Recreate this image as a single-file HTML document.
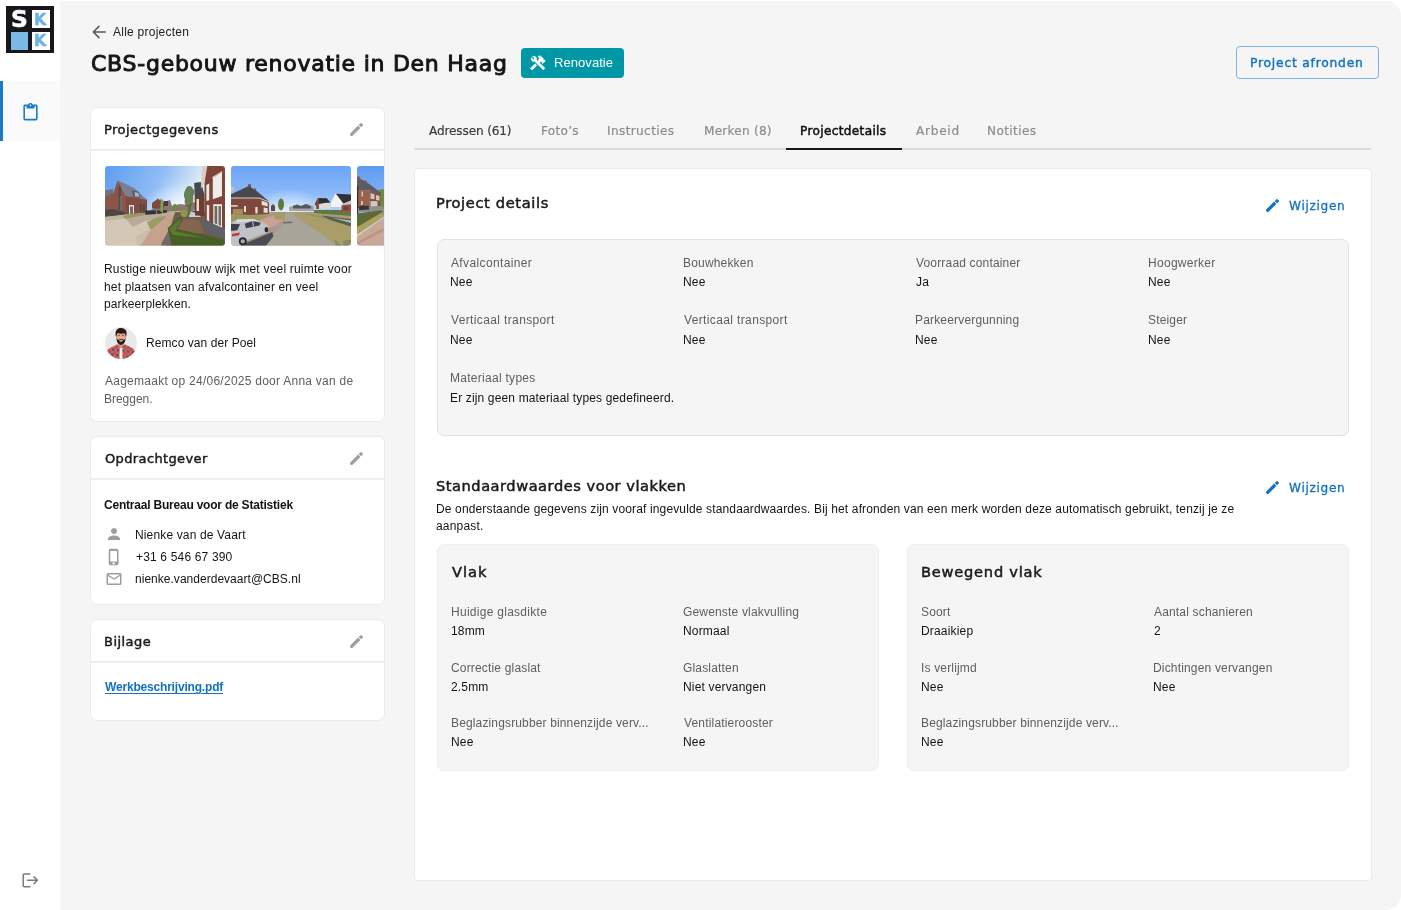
<!DOCTYPE html>
<html lang="nl">
<head>
<meta charset="utf-8">
<title>CBS-gebouw renovatie in Den Haag</title>
<style>
*{box-sizing:border-box;margin:0;padding:0}
html,body{width:1401px;height:910px;overflow:hidden;background:#fff}
body{font-family:"Liberation Sans",sans-serif;font-size:12.3px;color:#1a1a1a;position:relative}
.abs{position:absolute}
.t{position:absolute;white-space:nowrap;font-family:"Liberation Sans",sans-serif;will-change:transform}
.dj{font-family:"DejaVu Sans","Liberation Sans",sans-serif}
.b{font-weight:700}
svg{position:absolute;overflow:visible}
#main{left:60px;top:1px;width:1341px;height:909px;background:#f5f5f5;border-radius:0 15px 15px 0}
.card{position:absolute;background:#fff;border:1px solid #ebebeb;border-radius:7px}
.hr{position:absolute;height:2px;background:#efefef}
.box{position:absolute;background:#f5f5f5;border-radius:7px}
</style>
</head>
<body>
<!-- sidebar -->
<div class="abs" style="left:0;top:81px;width:60px;height:60px;background:#fafafa"></div>
<div class="abs" style="left:0;top:81px;width:3px;height:60px;background:#187bc8"></div>
<div class="abs" id="main"></div>
<!-- logo -->
<div class="abs" style="left:6.4px;top:6px;width:47.3px;height:47px;background:#19171b"></div>
<div class="abs" style="left:32px;top:10px;width:18.2px;height:18px;background:#fff"></div>
<div class="abs" style="left:32px;top:32px;width:18.2px;height:17.8px;background:#fff"></div>
<div class="abs" style="left:10.5px;top:32px;width:17.5px;height:17.8px;background:#7ab9e6"></div>
<!-- header shapes -->
<div class="abs" style="left:521px;top:47.5px;width:103px;height:30px;background:#0097a7;border-radius:4px"></div>
<div class="abs" style="left:1236px;top:46px;width:143px;height:33px;border:1px solid #7fb2e0;border-radius:4px"></div>
<!-- tabs line -->
<div class="abs" style="left:414px;top:148px;width:957px;height:2px;background:#dcdcdc"></div>
<div class="abs" style="left:786px;top:148px;width:115.5px;height:2px;background:#1a1a1a"></div>
<!-- left cards -->
<div class="card" style="left:90px;top:107px;width:295px;height:315px"></div>
<div class="hr" style="left:91px;top:149px;width:293px"></div>
<div class="card" style="left:90px;top:436px;width:295px;height:169px"></div>
<div class="hr" style="left:91px;top:478px;width:293px"></div>
<div class="card" style="left:90px;top:619px;width:295px;height:102px"></div>
<div class="hr" style="left:91px;top:661px;width:293px"></div>
<!-- main panel -->
<div class="card" style="left:414px;top:168px;width:958px;height:713px;border-radius:4px"></div>
<div class="box" style="left:436.5px;top:239px;width:912.5px;height:197px;border:1px solid #e1e1e1"></div>
<div class="box" style="left:436.5px;top:543.5px;width:442.5px;height:227px;border:1px solid #efefef"></div>
<div class="box" style="left:907px;top:543.5px;width:442px;height:227px;border:1px solid #efefef"></div>
<!-- icons -->
<svg style="left:20.7px;top:102.9px" width="19" height="19" viewBox="0 0 24 24"><path fill="#187bc8" d="M19 2h-4.18C14.4.84 13.3 0 12 0S9.6.84 9.18 2H5c-1.1 0-2 .9-2 2v16c0 1.1.9 2 2 2h14c1.1 0 2-.9 2-2V4c0-1.1-.9-2-2-2zm-7 0c.55 0 1 .45 1 1s-.45 1-1 1-1-.45-1-1 .45-1 1-1zm7 18H5V4h2v3h10V4h2v16z"/></svg>
<svg style="left:20px;top:870px" width="20" height="20" viewBox="0 0 20 20"><path fill="none" stroke="#7a7a7a" stroke-width="1.5" stroke-linecap="round" stroke-linejoin="round" d="M9.8 3.9H4.2a1 1 0 0 0-1 1v10.8a1 1 0 0 0 1 1h5.6M7.5 10.3h9.6M14 6.9l3.4 3.4-3.4 3.4"/></svg>
<svg style="left:91px;top:24px" width="16" height="16" viewBox="0 0 16 16"><path fill="none" stroke="#555" stroke-width="1.5" stroke-linecap="round" stroke-linejoin="round" d="M14.3 8H2.6M7.9 2.4L2.3 8l5.6 5.6"/></svg>
<svg style="left:529px;top:53.5px" width="18" height="18" viewBox="0 0 24 24"><g fill="#fff" stroke="#fff" stroke-width="0.9" stroke-linejoin="round" transform="translate(24 0) scale(-1 1)"><rect x="16.34" y="12.87" width="3" height="8.49" transform="matrix(0.7071 -0.7071 0.7071 0.7071 -6.8754 17.6255)"/><path d="M17.5,10c1.93,0,3.5-1.57,3.5-3.5c0-0.58-0.16-1.12-0.41-1.6l-2.7,2.7L16.4,6.11l2.7-2.7C18.62,3.16,18.08,3,17.5,3 C15.57,3,14,4.57,14,6.5c0,0.41,0.08,0.8,0.21,1.16l-1.85,1.85l-1.78-1.78l0.71-0.71L9.88,5.61L12,3.49 c-1.17-1.17-3.07-1.17-4.24,0L4.22,7.03l1.41,1.41H2.81L2.1,9.15l3.54,3.54l0.71-0.71V9.15l1.41,1.41l0.71-0.71l1.78,1.78 l-7.41,7.41l2.12,2.12L16.34,9.79C16.7,9.92,17.09,10,17.5,10z"/></g></svg>
<svg style="left:105px;top:525.3px" width="18" height="18" viewBox="0 0 24 24"><path fill="#9e9e9e" d="M12 12c2.21 0 4-1.79 4-4s-1.79-4-4-4-4 1.79-4 4 1.79 4 4 4zm0 2c-2.67 0-8 1.34-8 4v2h16v-2c0-2.66-5.33-4-8-4z"/></svg>
<svg style="left:105px;top:547.6px" width="18" height="18" viewBox="0 0 24 24"><path fill="#9e9e9e" d="M15.5 1h-8C6.12 1 5 2.12 5 3.5v17C5 21.88 6.12 23 7.5 23h8c1.38 0 2.500-1.12 2.500-2.500v-17C18 2.120 16.880 1 15.500 1zm-4 21c-.83 0-1.500-.67-1.500-1.500s.67-1.500 1.500-1.500 1.500.67 1.500 1.500-.67 1.500-1.500 1.500zm4.500-4H7V4h9v14z"/></svg>
<svg style="left:104.7px;top:569.8px" width="18" height="18" viewBox="0 0 24 24"><path fill="#9e9e9e" d="M20 4H4c-1.100 0-1.990.9-1.990 2L2 18c0 1.100.9 2 2 2h16c1.100 0 2-.9 2-2V6c0-1.100-.9-2-2-2zm0 14H4V8l8 5 8-5v10zm-8-7L4 6h16l-8 5z"/></svg>

<svg style="left:347.9px;top:120.6px" width="17" height="17" viewBox="0 0 24 24"><g fill="#9e9e9e" transform="rotate(45 12 12)"><path d="M9.700 1.700a.9.900 0 0 1 .900-.900h2.800a.9.900 0 0 1 .900.900v3.500H9.700z"/><path d="M9.700 6.500h4.600v15.200a2.300 2.300 0 0 1-4.600 0z"/></g></svg>
<svg style="left:347.9px;top:449.6px" width="17" height="17" viewBox="0 0 24 24"><g fill="#9e9e9e" transform="rotate(45 12 12)"><path d="M9.700 1.700a.9.900 0 0 1 .900-.900h2.800a.9.900 0 0 1 .900.900v3.500H9.700z"/><path d="M9.700 6.500h4.600v15.200a2.300 2.300 0 0 1-4.600 0z"/></g></svg>
<svg style="left:347.9px;top:632.6px" width="17" height="17" viewBox="0 0 24 24"><g fill="#9e9e9e" transform="rotate(45 12 12)"><path d="M9.700 1.700a.9.900 0 0 1 .900-.900h2.800a.9.900 0 0 1 .900.900v3.500H9.700z"/><path d="M9.700 6.500h4.600v15.200a2.300 2.300 0 0 1-4.600 0z"/></g></svg>
<svg style="left:1264.2px;top:196.7px" width="17" height="17" viewBox="0 0 24 24"><g fill="#1272c2" transform="rotate(45 12 12)"><path d="M9.700 1.700a.9.900 0 0 1 .900-.900h2.800a.9.900 0 0 1 .900.900v3.500H9.700z"/><path d="M9.700 6.500h4.600v15.200a2.300 2.300 0 0 1-4.600 0z"/></g></svg>
<svg style="left:1264.2px;top:479.2px" width="17" height="17" viewBox="0 0 24 24"><g fill="#1272c2" transform="rotate(45 12 12)"><path d="M9.700 1.700a.9.900 0 0 1 .900-.900h2.800a.9.900 0 0 1 .900.900v3.500H9.700z"/><path d="M9.700 6.500h4.600v15.200a2.300 2.300 0 0 1-4.600 0z"/></g></svg>
<!-- photos -->
<div class="abs" style="left:105px;top:166.3px;width:278.6px;height:79.700px;overflow:hidden">
<svg style="left:0;top:0" width="120" height="79.700" viewBox="0 0 120 79.700">
<defs>
<linearGradient id="s1" x1="0" y1="0" x2="1" y2="0.35"><stop offset="0" stop-color="#5c9df2"/><stop offset="0.45" stop-color="#8fbcf5"/><stop offset="0.75" stop-color="#dbe9f6"/><stop offset="1" stop-color="#eef3f6"/></linearGradient>
<radialGradient id="g1" cx="0.66" cy="0.58" r="0.38"><stop offset="0" stop-color="#fff" stop-opacity="0.95"/><stop offset="1" stop-color="#fff" stop-opacity="0"/></radialGradient>
<filter id="bl" x="-5%" y="-5%" width="110%" height="110%"><feGaussianBlur stdDeviation="0.45"/></filter><clipPath id="c1"><rect width="120" height="79.700" rx="3"/></clipPath>
<linearGradient id="s2" x1="0" y1="0" x2="0" y2="1"><stop offset="0" stop-color="#6ba4f6"/><stop offset="0.3" stop-color="#86b6f8"/><stop offset="0.58" stop-color="#b4d3fa"/></linearGradient><linearGradient id="s3" x1="0" y1="0" x2="0" y2="1"><stop offset="0" stop-color="#5d9bf0"/><stop offset="0.5" stop-color="#8ebaf6"/></linearGradient><radialGradient id="g2" cx="0.48" cy="0.58" r="0.3"><stop offset="0" stop-color="#fff" stop-opacity="0.7"/><stop offset="1" stop-color="#fff" stop-opacity="0"/></radialGradient>
</defs>
<g clip-path="url(#c1)"><g filter="url(#bl)">
<rect width="120" height="80" fill="url(#s1)"/><rect width="120" height="80" fill="url(#g1)"/>
<path d="M44 45l4-2 3-6 5-4 6 5v-3l3-1 2 6 8-2 8 1 6-3 3 1v12H44z" fill="#8b7770"/>
<path d="M47 37l6-4.500 6 5v5H47z" fill="#7c4c3e"/><path d="M59 35h4v5h-4z" fill="#3d3f49"/>
<path d="M0 24.500l8-1v24.500H0z" fill="#8b5647"/><path d="M0 24.500l8-1.500v4l-8 4z" fill="#6f727e"/>
<path d="M8 49V28l4.700-13.700L21 30v19z" fill="#8a5748"/>
<path d="M12.700 14.300L29 22l13 11.700-21-3.500z" fill="#7b808e"/>
<path d="M21 30l21 3.700V47l-21 2z" fill="#7f4e41"/>
<path d="M27 24l7 2 1 6-7-1z" fill="#565c69"/><path d="M29.500 26l4 1 .5 4-4-.7z" fill="#aeb6c2"/>
<path d="M24 39h5v9h-5z" fill="#e6e1da"/><path d="M25 40.500h3v7.500h-3z" fill="#6d6f6a"/><path d="M35 38.500h1.800v7h-1.800zM38 38.500h1.800v7H38z" fill="#4d4542"/>
<path d="M13.500 22l1.500-4 1 4v22h-2.500z" fill="#5d4a48"/><path d="M15.200 30l1.800 0v14h-1.800z" fill="#6b6f78"/>
<path d="M0 44l8-1 12 3v4L0 51z" fill="#4d4843"/>
<path d="M0 51l20-2 22-2 20-1 12-1 6 2-20 33H0z" fill="#d3c7b5"/>
<path d="M0 51l20-2.500 8 .5-10 4-18 2z" fill="#c4b49e"/>
<path d="M21 53l22-5.500 21-2 9-.5-13 6-20 4-12 6z" fill="#b9aa9a"/>
<path d="M18 50l10-2.500 12-.5 2 1.500-12 2.500-10 2z" fill="#98995f"/>
<path d="M42 56l11-5 8-1 1.500 3-8 7-9 4z" fill="#9a9c68"/>
<path d="M62.500 49.500l12-4 3 1-10 16-10.500 17.500H34l10-14z" fill="#c6a18d"/>
<path d="M31 71l12-8 3 1-10 15h-4z" fill="#cbbfa9"/>
<path d="M40 44.500h10.500l1 3.500-11 .8zM51.500 44.800l5-.5 1 3-5 .7zM57.500 44.200l4-.2.600 2.500-4 .5z" fill="#30323a"/>
<path d="M55.500 37l1.200-5 1.300 5v9h-2.500z" fill="#86a055"/><path d="M67.500 41c0-2 1.500-3 2.500-3s2.500 1 2.500 3-1 4-2.500 4-2.500-2-2.500-4z" fill="#6b8a45"/>
<path d="M70 46h50v34H60z" fill="#6e5d50"/><path d="M57 76l7-12 4 1-3 14.700h-9z" fill="#716963"/>
<path d="M62.600 62.300l12.900-12 1.500 2.500-5 10.200 20 4 27 6.400 1 6.300H67z" fill="#465e27"/>
<path d="M64 63l11-10.500 1 1.500-6 11 30 7-32-3z" fill="#5c7a30"/>
<path d="M73 63l6-10 15 1 5 13-8 .5z" fill="#84664f"/>
<path d="M95 55l4.500-2L120 62.300v10.200L105 68z" fill="#5f6067"/>
<path d="M84 48c0-2 2-3.500 5.500-3.500s5.500 1 6 3.500v3h-11.500z" fill="#c9ccd0"/><path d="M85.500 46l3-1h4l2 1.500z" fill="#3a3e46"/>
<path d="M82 21c2-2 5-1 6 2 2 1 2 5 0 7 1 3 0 8-2 10l-1 9h-1.500l-.5-8c-3-1-4-5-3-8-2-3-1-8 2-12z" fill="#4f6c37" fill-opacity=".85"/>
<circle cx="79.200" cy="47.500" r="3.600" fill="#8c9b3c"/>
<path d="M89.400 17l6.400-.8L99.500 29v21l-9.500-.5z" fill="#6c3c32"/><path d="M89.400 17l6.400-.8 3.400 12.800-8.900 1z" fill="#454a57"/>
<path d="M91.500 33h2.500v12h-2.500z" fill="#e1dcd5"/>
<path d="M99.500 0H120v62.300L99.500 53z" fill="#7e4539"/>
<path d="M97.200 0h5.100l-2.800 17-3.700 5.600z" fill="#dacfbf"/>
<path d="M107.800 11.500L117 6v24l-9.200 3.200z" fill="#eeeceb"/><path d="M107.300 11l10-6v1.500l-10 6z" fill="#d9cdb8"/>
<path d="M101.400 19l2.800-1.500v16.700l-2.800.8z" fill="#eeeceb"/>
<path d="M101.800 38.800l2.400.4v16.200l-2.400-1.400z" fill="#eeeceb"/>
<path d="M108.300 38.300h8.700v23.100l-8.700-3.700z" fill="#f1efec"/><path d="M109.500 40h2.800v18.500l-2.800-1.200zM113.500 40h2.500v20l-2.500-1z" fill="#6f6a5e"/>
</g></g></svg>
<svg style="left:126px;top:0" width="120" height="79.700" viewBox="0 0 120 79.700">
<g clip-path="url(#c1)"><g filter="url(#bl)">
<rect width="120" height="80" fill="url(#s2)"/><rect width="120" height="80" fill="url(#g2)"/>
<path d="M0 46h120v34H0z" fill="#a99a7c"/>
<path d="M58 41l6-2 6 1 6-2 7 2v5H58z" fill="#a7a6a4"/><path d="M62 40l4-1.500 4 1.500 5-2 5 2.500v2H62z" fill="#55555c"/>
<path d="M40 40l2-2 2 2v5h-4z" fill="#5d4a48"/>
<path d="M83 44h37v6l-37-3z" fill="#5e7a41"/>
<path d="M83.800 38.300L87 31.900l8.800.4 3.700 4.200-2 1.500-12 2z" fill="#2f2f36"/>
<path d="M85.200 35l2-3 .8.500V43h-2.800z" fill="#8a4a3a"/><path d="M88 38l8-1.500 3.500 0V43H88z" fill="#ddd9d4"/><path d="M88.500 36.500l4-3.500 6 3.500z" fill="#2f2f36"/>
<path d="M100 41v-4.500l4.600-9.300 6.900 9.300-.5 4.500z" fill="#f3f3f1"/>
<path d="M105 27.700l15 .9v6l-7.500 2.800z" fill="#303036"/><path d="M112 38l8-3.500v4l-8 1z" fill="#c9c7c4"/>
<path d="M110.600 39.200l9.400-.9v7.400h-9.400z" fill="#a64a3b"/><path d="M112.500 40.500h5v3.500h-5z" fill="#5a4a48"/>
<path d="M0 28.200l17.800-8.300 7.200 4.600 13.100 11-5.100.5-4.600-4H0z" fill="#46464e"/>
<path d="M17 18.300h3v3l-3-1zM23 22.500h2v2.800l-2-1.300z" fill="#8a4b3c"/>
<path d="M0 25.500l3-1v-3l-3-1z" fill="#c9c2b4"/>
<path d="M0 32h28.400l9.600 4v12L0 50z" fill="#7d463a"/><path d="M0 31.400h28.400l9.700 4v1l-9.700-4H0z" fill="#d9d2c8"/>
<path d="M30.700 34.500l6 2.500v3.500l-6-1.500zM32.600 41.500l4.100.7V47l-4.100-.5zM24.300 41h2.300v6.500h-2.300zM13 40h2v6h-2z" fill="#e3dfd9"/>
<path d="M0 39.200h6.700v1.400H0z" fill="#ece8e1"/><path d="M1.700 43h10.100v5.500H1.700z" fill="#a98a61"/>
<path d="M0 48l20 1 16.700 1.300-8.300 4.200L0 57z" fill="#9c9761"/>
<path d="M28.400 54l13.900-4.600 10.100 5.600-12.900 7-6-3z" fill="#c9a292"/>
<path d="M54.800 46.200H59L107 79.700H34.900l10-14 8.500-8.900z" fill="#a9a499"/>
<path d="M39.500 61.400l13-6.500 1 2-9 8.500-8 12-3-1z" fill="#b39388"/><path d="M40 62l9-4.500 2 .7-6.500 5z" fill="#9aa0a0"/>
<path d="M59 46.200l61 5.800v27.700h-13z" fill="#a99e6b"/>
<path d="M70 47.500l50 6v7l-30-8.500z" fill="#8f9461"/>
<path d="M90.300 49.400L120 53v7.500L99.500 54z" fill="#56614b"/><path d="M100 51.500l20 3v2.500z" fill="#aab4bd"/>
<path d="M103 73l8 6.700h-6zM112 75l8-1.500v6.200h-8z" fill="#8b8a68"/>
<path d="M47 38c0-3.500 1.800-5.500 3-5.500s3 2 3 5.500-1.500 6.500-3 6.500-3-3-3-6.500z" fill="#5c7b3b"/>
<path d="M43.200 50c1-3 4-4.500 6.500-4s4.600 2.500 4.600 5-3 2.500-5.500 2.500-6 0-5.600-3.500z" fill="#a59c63"/>
<path d="M52 56l8-.5 2 1.500-9 .5z" fill="#6b6963"/>
<path d="M10 79l31.400-13 .9 4.600-7.400 9.100H10z" fill="#4c4c54"/>
<path d="M0 56.800l6.300-3.200 15.700-.5 8.300 2.300 6.900 4.200.5 4.600-2.800 2.700-18.500 7.400-6.400 4.700-10 .7z" fill="#bfc2c6"/>
<path d="M6.300 53.600l15.700-.5 5 1.400-22 2z" fill="#dcdde0"/>
<path d="M0 57.700l9 .5-2.700 6L0 65.100z" fill="#3b3f47"/>
<path d="M13.700 57.700l7.800-2.700 8.300 1.800-1.400 2.800-13.400 2.700z" fill="#3c4048"/><path d="M21.500 55l1 5.500" stroke="#c5c7cb" stroke-width="1" fill="none"/>
<path d="M.7 67.900l8.300-1.400-.9 2.800-6.900 1.300z" fill="#c23b35"/>
<circle cx="11.800" cy="75.300" r="4" fill="#2b2c32"/><circle cx="11.800" cy="75.300" r="2.100" fill="#a9abb0"/>
<ellipse cx="35.400" cy="63.700" rx="1.900" ry="2.600" fill="#2b2c32"/>
</g></g></svg>
<svg style="left:252px;top:0" width="120" height="79.700" viewBox="0 0 120 79.700">
<g clip-path="url(#c1)"><g filter="url(#bl)">
<rect width="120" height="80" fill="url(#s3)"/>
<path d="M19.600 27c1-3 4-4.500 7.400-3.500v20h-7z" fill="#6d8a45"/>
<path d="M0 12.400h2.800l9.900 5.900 11.800 8.900-1.500 1.300-10.300-4.300H0z" fill="#5b5b63"/>
<path d="M0 10.400h2.800v2.800H0zM7.200 14.800h2.500v2.500l-2.500-1.300z" fill="#8e4f3e"/>
<path d="M0 24.200h12.700V41L0 42z" fill="#9b604b"/>
<path d="M12.700 24.200l10.800 4V40l-10.800 1z" fill="#84513f"/>
<path d="M4.500 25.500h1.500v5H4.500zM4 35h1.800v4H4zM13.500 27l4 1.200v5l-4-.5zM19 29l3.500 1v4.500L19 34zM13.500 35l7 .3v5l-7 .5z" fill="#cfc9c1"/>
<path d="M0 20h1.300v41H0z" fill="#3a2b26"/>
<path d="M1 42l22-2 3.500 1v5H1z" fill="#8f8f8c"/>
<path d="M1.800 40.500l4-1 6 .5.500 3.500-10 .8z" fill="#34363d"/>
<path d="M0 47.500l22.500-3 4 .5v4L0 66z" fill="#5d6a34"/>
<path d="M0 61l26.500-15.500V51L0 69z" fill="#a9a15b"/>
<path d="M0 68.500l26.500-17.500v1.500L0 71z" fill="#d3cdc2"/>
<path d="M0 71l26.500-19v28H0z" fill="#cba796"/>
<path d="M0 76l26.500-14v3L0 79z" fill="#b89686"/>
</g></g></svg>
</div>
<!-- avatar -->
<svg style="left:105px;top:327px" width="32" height="32" viewBox="0 0 32 32">
<defs><clipPath id="ca"><circle cx="16" cy="16" r="16"/></clipPath>
<pattern id="pl" width="5" height="5" patternUnits="userSpaceOnUse" patternTransform="rotate(8)"><rect width="5" height="5" fill="#e2625f"/><rect width="2.500" height="2.500" fill="#4c5666"/><rect x="2.500" y="2.500" width="2.500" height="2.500" fill="#b9494c"/></pattern></defs>
<g clip-path="url(#ca)">
<rect width="32" height="32" fill="#e9e9e9"/>
<path d="M1.500 26c.5-3.500 3-5.200 6-6.200l4.800-2.600L16 20l3.700-2.800 4.800 2.600c3 1 5.500 2.700 6 6.200L28 32H4z" fill="url(#pl)"/>
<path d="M14.700 21l1.300-1 1.300 1 .3 11h-3.200z" fill="#eef0f2"/>
<path d="M13.200 14h5.600v4.600L16 21l-2.800-2.400z" fill="#cf9778"/>
<ellipse cx="16" cy="9.600" rx="4.500" ry="5.600" fill="#e3ad8d"/>
<path d="M11.400 10.500c.1 4.800 2 7.300 4.600 7.300s4.500-2.500 4.600-7.300c-.5 1.700-1.200 2.400-2 2.200-1.600-.6-3.600-.6-5.200 0-.8.200-1.500-.5-2-2.200z" fill="#2f1d15"/>
<path d="M14 13.100c1.300.5 2.700.5 4 0-.4 1.100-1.200 1.600-2 1.600s-1.600-.5-2-1.600z" fill="#f6f1ec"/>
<path d="M11.200 10.800c-1.200-4-.8-7 1-8.500C13.500 1.100 15 .9 16.300 1c2 .1 3.700 1 4.700 2.600 1 1.700.8 4.200-.2 7.200-.1-2.300-.6-3.800-1.500-4.600-2 .7-4.600.5-6.300-.3-1 .9-1.600 2.600-1.800 4.900z" fill="#2b1a13"/>
<path d="M13 8.300h2M17 8.300h2" stroke="#4a3025" stroke-width="0.700"/>
</g></svg>
<!-- text -->
<div class="t" style="left:113px;top:24px;font-size:12px;line-height:17px;color:#222;letter-spacing:0.251px;">Alle projecten</div>
<div class="t dj" style="left:91px;top:48px;font-size:22px;line-height:31px;color:#151515;letter-spacing:0.740px;-webkit-text-stroke:0.95px #151515;">CBS-gebouw renovatie in Den Haag</div>
<div class="t" style="left:554px;top:54px;font-size:13px;line-height:18px;color:#fff;letter-spacing:0.065px;">Renovatie</div>
<div class="t dj" style="left:1250px;top:55px;font-size:12.3px;line-height:17px;color:#1272c2;letter-spacing:0.779px;-webkit-text-stroke:0.4px #1272c2;">Project afronden</div>
<div class="t dj b" style="left:11px;top:3px;font-size:23.4px;line-height:33px;color:#fff;-webkit-text-stroke:0.6px #fff;">S</div>
<div class="t dj b" style="left:34px;top:9px;font-size:15.8px;line-height:22px;color:#6cb2e4;-webkit-text-stroke:0.5px #6cb2e4;">K</div>
<div class="t dj b" style="left:34px;top:30px;font-size:15.8px;line-height:22px;color:#6cb2e4;-webkit-text-stroke:0.5px #6cb2e4;">K</div>
<div class="t dj" style="left:429px;top:123px;font-size:12.1px;line-height:17px;color:#3a3a3a;letter-spacing:-0.140px;-webkit-text-stroke:0.2px #3a3a3a;">Adressen (61)</div>
<div class="t dj" style="left:541px;top:123px;font-size:12.1px;line-height:17px;color:#8c8c8c;letter-spacing:0.274px;-webkit-text-stroke:0.2px #8c8c8c;">Foto’s</div>
<div class="t dj" style="left:607px;top:123px;font-size:12.1px;line-height:17px;color:#8c8c8c;letter-spacing:0.368px;-webkit-text-stroke:0.2px #8c8c8c;">Instructies</div>
<div class="t dj" style="left:704px;top:123px;font-size:12.1px;line-height:17px;color:#8c8c8c;letter-spacing:0.232px;-webkit-text-stroke:0.2px #8c8c8c;">Merken (8)</div>
<div class="t dj" style="left:800px;top:123px;font-size:12.1px;line-height:17px;color:#111;letter-spacing:0.340px;-webkit-text-stroke:0.5px #111;">Projectdetails</div>
<div class="t dj" style="left:916px;top:123px;font-size:12.1px;line-height:17px;color:#8c8c8c;letter-spacing:0.737px;-webkit-text-stroke:0.2px #8c8c8c;">Arbeid</div>
<div class="t dj" style="left:987px;top:123px;font-size:12.1px;line-height:17px;color:#8c8c8c;letter-spacing:0.383px;-webkit-text-stroke:0.2px #8c8c8c;">Notities</div>
<div class="t dj" style="left:104px;top:121px;font-size:13px;line-height:18px;color:#1a1a1a;letter-spacing:0.463px;-webkit-text-stroke:0.45px #1a1a1a;">Projectgegevens</div>
<div class="t dj" style="left:105px;top:450px;font-size:13px;line-height:18px;color:#1a1a1a;letter-spacing:0.370px;-webkit-text-stroke:0.45px #1a1a1a;">Opdrachtgever</div>
<div class="t dj" style="left:104px;top:633px;font-size:13px;line-height:18px;color:#1a1a1a;letter-spacing:0.464px;-webkit-text-stroke:0.45px #1a1a1a;">Bijlage</div>
<div class="t" style="left:104px;top:261px;font-size:12px;line-height:17px;color:#141414;letter-spacing:0.199px;">Rustige nieuwbouw wijk met veel ruimte voor</div>
<div class="t" style="left:104px;top:279px;font-size:12px;line-height:17px;color:#141414;letter-spacing:0.159px;">het plaatsen van afvalcontainer en veel</div>
<div class="t" style="left:104px;top:296px;font-size:12px;line-height:17px;color:#141414;letter-spacing:0.106px;">parkeerplekken.</div>
<div class="t" style="left:146px;top:335px;font-size:12px;line-height:17px;color:#141414;letter-spacing:0.073px;">Remco van der Poel</div>
<div class="t" style="left:105px;top:373px;font-size:12px;line-height:17px;color:#5e5e5e;letter-spacing:0.256px;">Aagemaakt op 24/06/2025 door Anna van de</div>
<div class="t" style="left:104px;top:391px;font-size:12px;line-height:17px;color:#5e5e5e;letter-spacing:-0.018px;">Breggen.</div>
<div class="t b" style="left:104px;top:497px;font-size:12px;line-height:17px;color:#141414;letter-spacing:-0.212px;">Centraal Bureau voor de Statistiek</div>
<div class="t" style="left:135px;top:527px;font-size:12px;line-height:17px;color:#141414;letter-spacing:0.146px;">Nienke van de Vaart</div>
<div class="t" style="left:136px;top:549px;font-size:12px;line-height:17px;color:#141414;letter-spacing:0.168px;">+31 6 546 67 390</div>
<div class="t" style="left:135px;top:571px;font-size:12px;line-height:17px;color:#141414;letter-spacing:0.024px;">nienke.vanderdevaart@CBS.nl</div>
<div class="t b" style="left:105px;top:679px;font-size:12px;line-height:17px;color:#1272c2;letter-spacing:-0.186px;text-decoration:underline;text-underline-offset:1.5px;">Werkbeschrijving.pdf</div>
<div class="t dj" style="left:436px;top:193px;font-size:14.6px;line-height:20px;color:#1a1a1a;letter-spacing:0.651px;-webkit-text-stroke:0.5px #1a1a1a;">Project details</div>
<div class="t dj" style="left:1289px;top:198px;font-size:12.1px;line-height:17px;color:#1272c2;letter-spacing:0.690px;-webkit-text-stroke:0.3px #1272c2;">Wijzigen</div>
<div class="t dj" style="left:1289px;top:480px;font-size:12.1px;line-height:17px;color:#1272c2;letter-spacing:0.690px;-webkit-text-stroke:0.3px #1272c2;">Wijzigen</div>
<div class="t" style="left:451px;top:255px;font-size:12px;line-height:17px;color:#5e5e5e;letter-spacing:0.368px;">Afvalcontainer</div>
<div class="t" style="left:450px;top:274px;font-size:12px;line-height:17px;color:#141414;letter-spacing:0.170px;">Nee</div>
<div class="t" style="left:683px;top:255px;font-size:12px;line-height:17px;color:#5e5e5e;letter-spacing:0.179px;">Bouwhekken</div>
<div class="t" style="left:683px;top:274px;font-size:12px;line-height:17px;color:#141414;letter-spacing:0.170px;">Nee</div>
<div class="t" style="left:916px;top:255px;font-size:12px;line-height:17px;color:#5e5e5e;letter-spacing:0.170px;">Voorraad container</div>
<div class="t" style="left:916px;top:274px;font-size:12px;line-height:17px;color:#141414;letter-spacing:0.170px;">Ja</div>
<div class="t" style="left:1148px;top:255px;font-size:12px;line-height:17px;color:#5e5e5e;letter-spacing:0.292px;">Hoogwerker</div>
<div class="t" style="left:1148px;top:274px;font-size:12px;line-height:17px;color:#141414;letter-spacing:0.170px;">Nee</div>
<div class="t" style="left:451px;top:312px;font-size:12px;line-height:17px;color:#5e5e5e;letter-spacing:0.367px;">Verticaal transport</div>
<div class="t" style="left:450px;top:332px;font-size:12px;line-height:17px;color:#141414;letter-spacing:0.170px;">Nee</div>
<div class="t" style="left:684px;top:312px;font-size:12px;line-height:17px;color:#5e5e5e;letter-spacing:0.367px;">Verticaal transport</div>
<div class="t" style="left:683px;top:332px;font-size:12px;line-height:17px;color:#141414;letter-spacing:0.170px;">Nee</div>
<div class="t" style="left:915px;top:312px;font-size:12px;line-height:17px;color:#5e5e5e;letter-spacing:0.170px;">Parkeervergunning</div>
<div class="t" style="left:915px;top:332px;font-size:12px;line-height:17px;color:#141414;letter-spacing:0.170px;">Nee</div>
<div class="t" style="left:1148px;top:312px;font-size:12px;line-height:17px;color:#5e5e5e;letter-spacing:0.170px;">Steiger</div>
<div class="t" style="left:1148px;top:332px;font-size:12px;line-height:17px;color:#141414;letter-spacing:0.170px;">Nee</div>
<div class="t" style="left:450px;top:370px;font-size:12px;line-height:17px;color:#5e5e5e;letter-spacing:0.282px;">Materiaal types</div>
<div class="t" style="left:450px;top:390px;font-size:12px;line-height:17px;color:#141414;letter-spacing:0.148px;">Er zijn geen materiaal types gedefineerd.</div>
<div class="t dj" style="left:436px;top:476px;font-size:14.6px;line-height:20px;color:#1a1a1a;letter-spacing:0.537px;-webkit-text-stroke:0.5px #1a1a1a;">Standaardwaardes voor vlakken</div>
<div class="t" style="left:436px;top:501px;font-size:12px;line-height:17px;color:#141414;letter-spacing:0.140px;">De onderstaande gegevens zijn vooraf ingevulde standaardwaardes. Bij het afronden van een merk worden deze automatisch gebruikt, tenzij je ze</div>
<div class="t" style="left:436px;top:518px;font-size:12px;line-height:17px;color:#141414;letter-spacing:0.170px;">aanpast.</div>
<div class="t dj" style="left:452px;top:562px;font-size:14.6px;line-height:20px;color:#1a1a1a;letter-spacing:1.042px;-webkit-text-stroke:0.5px #1a1a1a;">Vlak</div>
<div class="t dj" style="left:921px;top:562px;font-size:14.6px;line-height:20px;color:#1a1a1a;letter-spacing:0.785px;-webkit-text-stroke:0.5px #1a1a1a;">Bewegend vlak</div>
<div class="t" style="left:451px;top:604px;font-size:12px;line-height:17px;color:#5e5e5e;letter-spacing:0.277px;">Huidige glasdikte</div>
<div class="t" style="left:451px;top:623px;font-size:12px;line-height:17px;color:#141414;letter-spacing:0.170px;">18mm</div>
<div class="t" style="left:683px;top:604px;font-size:12px;line-height:17px;color:#5e5e5e;letter-spacing:0.170px;">Gewenste vlakvulling</div>
<div class="t" style="left:683px;top:623px;font-size:12px;line-height:17px;color:#141414;letter-spacing:0.170px;">Normaal</div>
<div class="t" style="left:451px;top:660px;font-size:12px;line-height:17px;color:#5e5e5e;letter-spacing:0.170px;">Correctie glaslat</div>
<div class="t" style="left:451px;top:679px;font-size:12px;line-height:17px;color:#141414;letter-spacing:0.170px;">2.5mm</div>
<div class="t" style="left:683px;top:660px;font-size:12px;line-height:17px;color:#5e5e5e;letter-spacing:0.170px;">Glaslatten</div>
<div class="t" style="left:683px;top:679px;font-size:12px;line-height:17px;color:#141414;letter-spacing:0.170px;">Niet vervangen</div>
<div class="t" style="left:451px;top:715px;font-size:12px;line-height:17px;color:#5e5e5e;letter-spacing:0.143px;">Beglazingsrubber binnenzijde verv...</div>
<div class="t" style="left:451px;top:734px;font-size:12px;line-height:17px;color:#141414;letter-spacing:0.170px;">Nee</div>
<div class="t" style="left:684px;top:715px;font-size:12px;line-height:17px;color:#5e5e5e;letter-spacing:0.170px;">Ventilatierooster</div>
<div class="t" style="left:683px;top:734px;font-size:12px;line-height:17px;color:#141414;letter-spacing:0.170px;">Nee</div>
<div class="t" style="left:921px;top:604px;font-size:12px;line-height:17px;color:#5e5e5e;letter-spacing:0.170px;">Soort</div>
<div class="t" style="left:921px;top:623px;font-size:12px;line-height:17px;color:#141414;letter-spacing:0.170px;">Draaikiep</div>
<div class="t" style="left:1154px;top:604px;font-size:12px;line-height:17px;color:#5e5e5e;letter-spacing:0.170px;">Aantal schanieren</div>
<div class="t" style="left:1154px;top:623px;font-size:12px;line-height:17px;color:#141414;letter-spacing:0.170px;">2</div>
<div class="t" style="left:921px;top:660px;font-size:12px;line-height:17px;color:#5e5e5e;letter-spacing:0.170px;">Is verlijmd</div>
<div class="t" style="left:921px;top:679px;font-size:12px;line-height:17px;color:#141414;letter-spacing:0.170px;">Nee</div>
<div class="t" style="left:1153px;top:660px;font-size:12px;line-height:17px;color:#5e5e5e;letter-spacing:0.170px;">Dichtingen vervangen</div>
<div class="t" style="left:1153px;top:679px;font-size:12px;line-height:17px;color:#141414;letter-spacing:0.170px;">Nee</div>
<div class="t" style="left:921px;top:715px;font-size:12px;line-height:17px;color:#5e5e5e;letter-spacing:0.143px;">Beglazingsrubber binnenzijde verv...</div>
<div class="t" style="left:921px;top:734px;font-size:12px;line-height:17px;color:#141414;letter-spacing:0.170px;">Nee</div>
</body>
</html>
